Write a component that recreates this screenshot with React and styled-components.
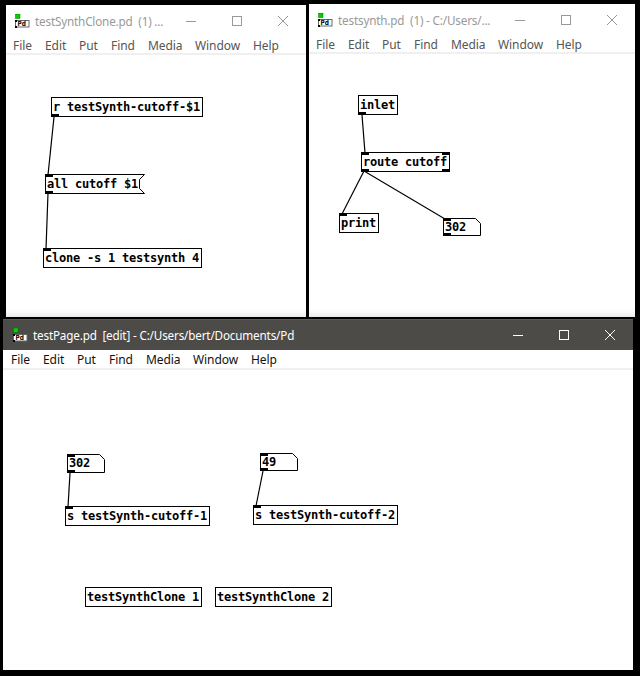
import React from 'react'
import styled, { createGlobalStyle } from 'styled-components'

const GlobalStyle = createGlobalStyle`
  html, body {
    margin: 0;
    padding: 0;
    background: #000;
  }
  #root {
    position: relative;
    width: 640px;
    height: 676px;
    overflow: hidden;
    background: #000;
  }
`

const WindowFrame = styled.div`
  position: absolute;
  left: ${p => p.$x}px;
  top: ${p => p.$y}px;
  width: ${p => p.$w}px;
  height: ${p => p.$h}px;
  display: flex;
  flex-direction: column;
  background: #fff;
  font-family: "Noto Sans", "Open Sans", sans-serif;
`

const TitleBar = styled.div`
  flex: none;
  height: ${p => (p.$active ? 31 : 32)}px;
  display: flex;
  align-items: center;
  padding-left: ${p => (p.$active ? 10 : 9)}px;
  background: ${p => (p.$active ? '#4d4b48' : '#fff')};
  box-shadow: ${p => (p.$active ? 'inset 0 1px #5e5c59' : 'none')};
  color: ${p => (p.$active ? '#fff' : '#999')};
`

const TitleText = styled.span`
  flex: 1;
  min-width: 0;
  margin-left: 5px;
  font-size: 11.7px;
  letter-spacing: -0.17px;
  white-space: pre;
`

const Controls = styled.div`
  flex: none;
  display: flex;
`

const ControlButton = styled.div`
  width: 46px;
  height: 30px;
  display: flex;
  align-items: center;
  justify-content: center;
`

const MenuBar = styled.div`
  flex: none;
  height: ${p => (p.$active ? 18 : 16)}px;
  line-height: ${p => (p.$active ? 18 : 16)}px;
  display: flex;
  align-items: flex-start;
  padding-left: ${p => (p.$active ? 8 : 7)}px;
  font-size: 12px;
  letter-spacing: -0.08px;
  color: ${p => (p.$active ? '#111' : '#555')};
  border-bottom: 2px solid #f0f0f0;
`

const MenuItem = styled.span`
  width: ${p => p.$w}px;
  margin-top: 1px;
`

const Canvas = styled.div`
  position: relative;
  flex: 1;
  background: #fff;
  box-shadow: ${p => (p.$active ? 'none' : 'inset 0 -9px 8px -8px rgba(0, 0, 0, 0.14)')};
`

const Wires = styled.svg`
  position: absolute;
  left: 0;
  top: 0;
  width: 100%;
  height: 100%;
`

const Box = styled.div`
  position: absolute;
  left: ${p => p.$x}px;
  top: ${p => p.$y}px;
  width: ${p => p.$w}px;
  height: ${p => p.$h}px;
  box-sizing: border-box;
  padding-left: 1px;
  border: ${p => (p.$bare ? '1px solid transparent' : '1px solid #000')};
  background: ${p => (p.$bare ? 'transparent' : '#fff')};
  font: bold 12px/${p => p.$h - 2}px "DejaVu Sans Mono", monospace;
  letter-spacing: -0.22px;
  color: #000;
  white-space: pre;
`

const Iolet = styled.span`
  position: absolute;
  width: 8px;
  height: 3px;
  background: #000;
  ${p => (p.$right ? 'right: -1px;' : 'left: -1px;')}
  ${p => (p.$bottom ? 'bottom: -1px;' : 'top: -1px;')}
`

const Outline = styled.svg`
  position: absolute;
  left: -1px;
  top: -1px;
  overflow: visible;
`

const BoxText = styled.span`
  position: relative;
`

const PdIcon = () => (
  <svg width="15" height="14" viewBox="0 0 15 14">
    <rect x="0.5" y="0" width="4.5" height="4.5" fill="#00d000" stroke="#007000" strokeWidth="0.5" />
    <rect x="0.5" y="6.5" width="13.5" height="6.5" fill="#fff" stroke="#666" />
    <rect x="0" y="6" width="2" height="2" fill="#000" />
    <rect x="0" y="12" width="2" height="2" fill="#000" />
    <text x="2.5" y="12" fontSize="7" fontWeight="bold" fontFamily="DejaVu Sans Mono, monospace" fill="#000">Pd</text>
  </svg>
)

const MinIcon = ({ color }) => (
  <svg width="10" height="10" viewBox="0 0 10 10"><path d="M0 5.5H10" stroke={color} /></svg>
)

const MaxIcon = ({ color }) => (
  <svg width="10" height="10" viewBox="0 0 10 10"><rect x="0.5" y="0.5" width="9" height="9" fill="none" stroke={color} /></svg>
)

const CloseIcon = ({ color }) => (
  <svg width="10" height="10" viewBox="0 0 10 10"><path d="M0 0L10 10M10 0L0 10" stroke={color} /></svg>
)

const menuItems = [['File', 32], ['Edit', 34], ['Put', 32], ['Find', 37], ['Media', 47], ['Window', 58], ['Help', 30]]

// pd object box with its inlets and outlets, shape is box, number or message
const PdNode = ({ x, y, w, h, text, shape, ins = ['l'], outs = ['l'] }) => {
  const points = shape === 'number'
    ? `0.5,0.5 ${w - 5.5},0.5 ${w - 0.5},5.5 ${w - 0.5},${h - 0.5} 0.5,${h - 0.5}`
    : `0.5,0.5 ${w - 0.5},0.5 ${w - 5.5},5.5 ${w - 5.5},${h - 5.5} ${w - 0.5},${h - 0.5} 0.5,${h - 0.5}`
  return (
    <Box $x={x} $y={y} $w={w} $h={h} $bare={!!shape}>
      {shape && (
        <Outline width={w} height={h}>
          <polygon points={points} fill="#fff" stroke="#000" />
        </Outline>
      )}
      <BoxText>{text}</BoxText>
      {ins.map(side => <Iolet key={'i' + side} $right={side === 'r'} />)}
      {outs.map(side => <Iolet key={'o' + side} $right={side === 'r'} $bottom />)}
    </Box>
  )
}

const PdWindow = ({ x, y, w, h, title, active, wires, nodes }) => {
  const glyph = active ? '#fff' : '#999'
  return (
    <WindowFrame $x={x} $y={y} $w={w} $h={h}>
      <TitleBar $active={active}>
        <PdIcon />
        <TitleText>{title}</TitleText>
        <Controls>
          <ControlButton><MinIcon color={glyph} /></ControlButton>
          <ControlButton><MaxIcon color={glyph} /></ControlButton>
          <ControlButton><CloseIcon color={glyph} /></ControlButton>
        </Controls>
      </TitleBar>
      <MenuBar $active={active}>
        {menuItems.map(([label, width]) => <MenuItem key={label} $w={width}>{label}</MenuItem>)}
      </MenuBar>
      <Canvas $active={active}>
        {nodes.map(n => <PdNode key={n.text} {...n} />)}
        <Wires>
          {wires.map((d, i) => <line key={i} x1={d[0]} y1={d[1]} x2={d[2]} y2={d[3]} stroke="#000" strokeWidth="1.2" />)}
        </Wires>
      </Canvas>
    </WindowFrame>
  )
}

const cloneNodes = [
  { x: 45, y: 42, w: 152, h: 20, text: 'r testSynth-cutoff-$1', ins: [] },
  { x: 39, y: 119, w: 100, h: 20, text: 'all cutoff $1', shape: 'message' },
  { x: 37, y: 193, w: 159, h: 20, text: 'clone -s 1 testsynth 4', outs: [] },
]
const cloneWires = [[48, 62, 42, 120], [42, 138, 40, 194]]

const synthNodes = [
  { x: 49, y: 41, w: 40, h: 20, text: 'inlet', ins: [] },
  { x: 52, y: 98, w: 89, h: 20, text: 'route cutoff', ins: ['l', 'r'], outs: ['l', 'r'] },
  { x: 30, y: 159, w: 40, h: 20, text: 'print', outs: [] },
  { x: 134, y: 164, w: 38, h: 18, text: '302', shape: 'number' },
]
const synthWires = [[53, 61, 56, 99], [55, 117, 33, 160], [55, 117, 136, 165]]

const pageNodes = [
  { x: 64, y: 84, w: 38, h: 19, text: '302', shape: 'number' },
  { x: 257, y: 83, w: 38, h: 18, text: '49', shape: 'number' },
  { x: 62, y: 136, w: 145, h: 20, text: 's testSynth-cutoff-1', outs: [] },
  { x: 250, y: 135, w: 145, h: 20, text: 's testSynth-cutoff-2', outs: [] },
  { x: 82, y: 217, w: 117, h: 20, text: 'testSynthClone 1', ins: [], outs: [] },
  { x: 212, y: 217, w: 117, h: 20, text: 'testSynthClone 2', ins: [], outs: [] },
]
const pageWires = [[67, 103, 65, 137], [260, 101, 253, 136]]

export default function App () {
  return (
    <>
      <GlobalStyle />
      <PdWindow x={6} y={5} w={300} h={312} title="testSynthClone.pd  (1) ..." nodes={cloneNodes} wires={cloneWires} />
      <PdWindow x={309} y={4} w={326} h={313} title="testsynth.pd  (1) - C:/Users/..." nodes={synthNodes} wires={synthWires} />
      <PdWindow x={3} y={319} w={630} h={351} active title="testPage.pd  [edit] - C:/Users/bert/Documents/Pd" nodes={pageNodes} wires={pageWires} />
    </>
  )
}
